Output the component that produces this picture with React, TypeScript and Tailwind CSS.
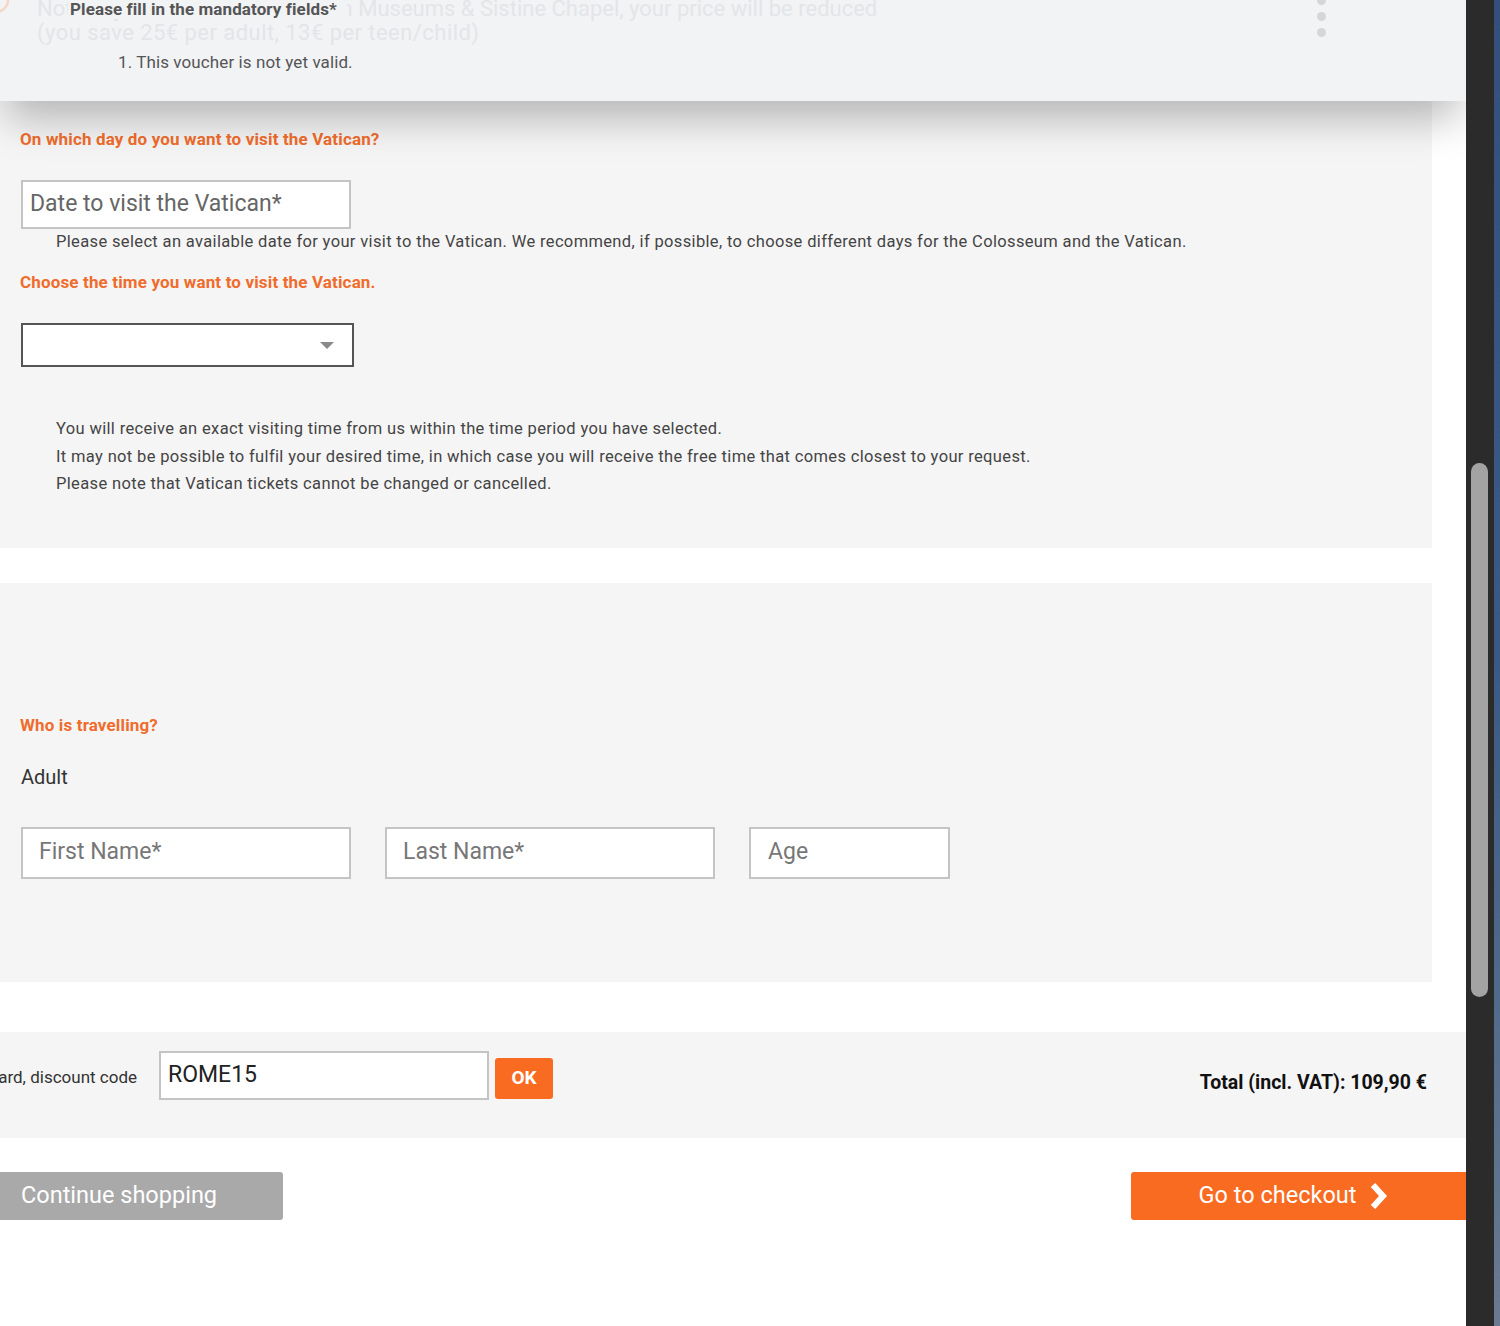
import React from "react";

const font = { fontFamily: "Roboto, 'Liberation Sans', Arial, sans-serif" };

function Overlay() {
  return (
    <div className="absolute left-0 top-0 z-10 h-[101px] w-full overflow-hidden bg-[#f2f3f5] shadow-[0_24px_40px_-6px_rgba(0,0,0,0.26)]">
      <svg className="absolute left-[-16px] top-[-14px]" width="30" height="34" viewBox="0 0 30 34">
        <circle cx="12" cy="14" r="12" fill="none" stroke="#f7d6c6" strokeWidth="2.5" />
      </svg>
      <div className="absolute left-[37px] top-[-3px] whitespace-nowrap text-[22px] leading-[24px] text-[#e3e5e8]">
        <div>Note: if you also add the Vatican Museums &amp; Sistine Chapel, your price will be reduced</div>
        <div className="tracking-[0.45px]">(you save 25€ per adult, 13€ per teen/child)</div>
      </div>
      <div className="absolute left-[68px] top-0 bg-[#f2f3f5] pl-[2px] pr-[10px] text-[17px] font-bold leading-[19px] tracking-[0.1px] text-[#555]">
        Please fill in the mandatory fields*
      </div>
      <div className="absolute left-[118px] top-[52px] text-[17px] leading-[20px] tracking-[0.1px] text-[#555]">
        1. This voucher is not yet valid.
      </div>
      <div className="absolute left-[1317px] top-[-4px] flex flex-col gap-[7px]">
        <span className="block h-[9px] w-[9px] rounded-full bg-[#d6d6d8]" />
        <span className="block h-[9px] w-[9px] rounded-full bg-[#d6d6d8]" />
        <span className="block h-[9px] w-[9px] rounded-full bg-[#d6d6d8]" />
      </div>
    </div>
  );
}

function Heading({ children }: { children: React.ReactNode }) {
  return <div className="text-[17px] font-bold leading-[20px] tracking-[0.15px] text-[#f06c2c]">{children}</div>;
}

export default function App() {
  return (
    <div style={font} className="flex h-[1326px] w-full overflow-hidden bg-white">
      <div className="relative h-full w-[1466px] shrink-0 overflow-hidden bg-white">
        <Overlay />

        {/* Panel 1 */}
        <div className="w-[1432px] bg-[#f5f5f5] px-5 pb-[50px] pt-[129px]">
          <Heading>On which day do you want to visit the Vatican?</Heading>
          <div className="ml-px mt-[31px] flex h-[49px] w-[330px] items-center border-2 border-[#c4c4c4] bg-white pl-[7px] text-[23px] text-[#666]">
            Date to visit the Vatican*
          </div>
          <div className="ml-[36px] mt-[3px] whitespace-nowrap text-[16.5px] leading-[20px] tracking-[0.35px] text-[#444]">
            Please select an available date for your visit to the Vatican. We recommend, if possible, to choose different days for the Colosseum and the Vatican.
          </div>
          <div className="mt-[20px]">
            <Heading>Choose the time you want to visit the Vatican.</Heading>
          </div>
          <div className="relative ml-px mt-[31px] h-[44px] w-[333px] border-2 border-[#555] bg-white">
            <svg className="absolute left-[297px] top-[17px]" width="14" height="8" viewBox="0 0 14 8">
              <path d="M0 0 L14 0 L7 7 Z" fill="#8a8a8a" />
            </svg>
          </div>
          <div className="ml-[36px] mt-[48px] text-[16.5px] leading-[27.5px] tracking-[0.35px] text-[#444]">
            <div>You will receive an exact visiting time from us within the time period you have selected.</div>
            <div>It may not be possible to fulfil your desired time, in which case you will receive the free time that comes closest to your request.</div>
            <div>Please note that Vatican tickets cannot be changed or cancelled.</div>
          </div>
        </div>

        {/* Panel 2 */}
        <div className="mt-[35px] w-[1432px] bg-[#f5f5f5] px-5 pb-[103px] pt-[132px]">
          <Heading>Who is travelling?</Heading>
          <div className="ml-px mt-[30px] text-[20px] leading-[24px] text-[#333]">Adult</div>
          <div className="ml-px mt-[38px] flex gap-[34px]">
            <div className="flex h-[52px] w-[330px] items-center border-2 border-[#c4c4c4] bg-white pl-[16px] text-[23px] text-[#777]">
              First Name*
            </div>
            <div className="flex h-[52px] w-[330px] items-center border-2 border-[#c4c4c4] bg-white pl-[16px] text-[23px] text-[#777]">
              Last Name*
            </div>
            <div className="flex h-[52px] w-[201px] items-center border-2 border-[#c4c4c4] bg-white pl-[17px] text-[23px] text-[#777]">
              Age
            </div>
          </div>
        </div>

        {/* Panel 3 */}
        <div className="mt-[50px] flex h-[106px] w-full items-start bg-[#f5f5f5] pr-[39px] pt-[19px]">
          <div className="mt-[16px] flex w-[137px] shrink-0 justify-end overflow-hidden whitespace-nowrap text-[17px] leading-[20px] text-[#333]">
            Voucher, gift card, discount code
          </div>
          <div className="ml-[22px] flex h-[49px] w-[330px] items-center border-2 border-[#c4c4c4] bg-white pl-[7px] text-[23px] text-[#222]">
            ROME15
          </div>
          <div className="ml-[6px] mt-[7px] flex h-[41px] w-[58px] items-center justify-center rounded-[3px] bg-[#f96b20] text-[19px] font-bold text-white">
            OK
          </div>
          <div className="ml-auto mt-[20px] text-[19.5px] font-bold leading-[24px] text-[#111]">
            Total (incl. VAT): 109,90 €
          </div>
        </div>

        {/* Buttons */}
        <div className="mt-[34px] flex items-start justify-between">
          <div className="flex h-[48px] w-[283px] items-center rounded-r-[3px] bg-[#a9a9a9] pl-[21px] text-[23.5px] text-white">
            Continue shopping
          </div>
          <div className="flex h-[48px] w-[335px] items-center justify-center gap-[12px] rounded-l-[3px] bg-[#f96b20] pr-[8px] text-[23.5px] text-white">
            <span>Go to checkout</span>
            <svg width="22" height="30" viewBox="0 0 22 30">
              <path d="M5 4 L15 15 L5 26" fill="none" stroke="white" strokeWidth="6" strokeLinejoin="miter" strokeLinecap="butt" />
            </svg>
          </div>
        </div>
      </div>

      {/* Right dark strip with scrollbar */}
      <div className="relative h-full flex-1 bg-[#2b2b2b]">
        <div className="absolute left-[5px] top-[463px] h-[534px] w-[17px] rounded-full bg-[#a3a3a3]" />
        <div className="absolute right-0 top-0 h-full w-[6px] bg-gradient-to-b from-[#34507a] via-[#3a5a84] to-[#6a7a90]" />
      </div>
    </div>
  );
}
